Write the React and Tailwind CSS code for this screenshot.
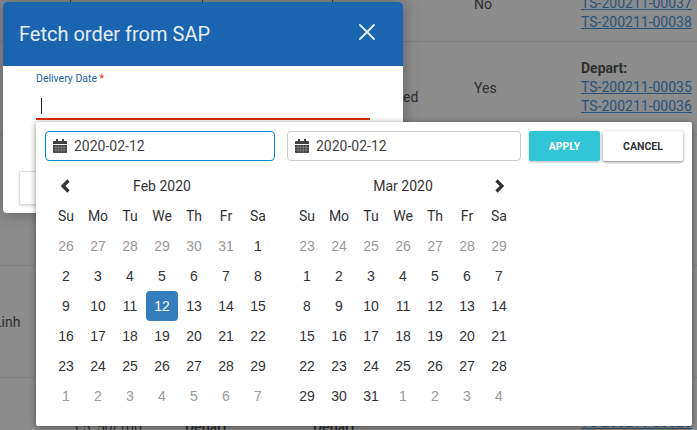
import { X } from 'lucide-react'

const WEEKDAYS = ['Su', 'Mo', 'Tu', 'We', 'Th', 'Fr', 'Sa']

const FEB = [
  [26, 27, 28, 29, 30, 31, 1],
  [2, 3, 4, 5, 6, 7, 8],
  [9, 10, 11, 12, 13, 14, 15],
  [16, 17, 18, 19, 20, 21, 22],
  [23, 24, 25, 26, 27, 28, 29],
  [1, 2, 3, 4, 5, 6, 7],
]

const MAR = [
  [23, 24, 25, 26, 27, 28, 29],
  [1, 2, 3, 4, 5, 6, 7],
  [8, 9, 10, 11, 12, 13, 14],
  [15, 16, 17, 18, 19, 20, 21],
  [22, 23, 24, 25, 26, 27, 28],
  [29, 30, 31, 1, 2, 3, 4],
]

function CalendarIcon() {
  return (
    <svg width="14" height="14" viewBox="0 0 14 14" className="shrink-0" fill="#3f3f3f">
      <rect x="3" y="0" width="2" height="3" />
      <rect x="9" y="0" width="2" height="3" />
      <path d="M1 2h12a1 1 0 0 1 1 1v2H0V3a1 1 0 0 1 1-1z" />
      <path d="M0 6h14v7a1 1 0 0 1-1 1H1a1 1 0 0 1-1-1z" />
      <path d="M0 8.5h14M0 11h14M3 6v8M5.7 6v8M8.4 6v8M11 6v8" stroke="#999" strokeWidth="0.6" />
    </svg>
  )
}

function Chevron({ dir }) {
  return (
    <svg width="12" height="14" viewBox="0 0 12 14" fill="none" stroke="#333" strokeWidth="3.2" strokeLinejoin="miter">
      <polyline points={dir === 'left' ? '8.5,1.5 3,7 8.5,12.5' : '3.5,1.5 9,7 3.5,12.5'} />
    </svg>
  )
}

function Month({ title, weeks, firstOffWeekEnd, lastOffFrom, selected, left, right }) {
  return (
    <div className="w-56 font-['Liberation_Sans',sans-serif] text-sm text-[#333]">
      <div className="grid h-[30px] grid-cols-7 items-center text-center font-['Roboto',sans-serif]">
        <div className="flex justify-center">{left && <Chevron dir="left" />}</div>
        <div className="col-span-5">{title}</div>
        <div className="flex justify-center">{right && <Chevron dir="right" />}</div>
      </div>
      <div className="grid grid-cols-7 text-center">
        {WEEKDAYS.map((d) => (
          <div key={d} className="flex h-[30px] items-center justify-center font-['Roboto',sans-serif]">{d}</div>
        ))}
        {weeks.map((week, w) =>
          week.map((day, i) => {
            const off = (w === 0 && i < firstOffWeekEnd) || (w === 5 && i >= lastOffFrom)
            const isSel = w === 2 && day === selected
            return (
              <div
                key={`${w}-${i}`}
                className={
                  isSel
                    ? 'flex h-[30px] items-center justify-center rounded-[4px] bg-[#357ebd] text-white'
                    : off
                      ? 'flex h-[30px] items-center justify-center text-[#999]'
                      : 'flex h-[30px] items-center justify-center'
                }
              >
                {day}
              </div>
            )
          }),
        )}
      </div>
    </div>
  )
}

export default function App() {
  return (
    <div className="relative h-[430px] w-[697px] overflow-hidden bg-[#8c8c8c] font-['Roboto',sans-serif] text-sm text-[#2f2f2f]">
      {/* table behind the backdrop */}
      <div className="grid grid-cols-[474px_107px_116px]">
        <div className="col-span-3 grid h-[42px] grid-cols-[474px_107px_116px] border-b border-[#7f7f7f]">
          <div className="flex items-start">
            <div className="ml-[70px] h-[2px] w-px bg-[#444]" />
            <div className="ml-[131px] h-[2px] w-px bg-[#444]" />
            <div className="ml-[129px] h-[2px] w-px bg-[#444]" />
          </div>
          <div className="mt-[-5px] leading-[19px]">No</div>
          <div className="mt-[-6px] leading-[19px] text-[#2b5378] underline">
            <div>TS-200211-00037</div>
            <div>TS-200211-00038</div>
          </div>
        </div>

        <div className="col-span-3 grid h-[93px] grid-cols-[474px_107px_116px] items-center border-b border-[#7f7f7f]">
          <div className="pl-[403px]"><span className="relative top-[9px]">ed</span></div>
          <div>Yes</div>
          <div className="mt-[-2px] leading-[19px]">
            <div className="font-bold">Depart:</div>
            <div className="text-[#2b5378] underline">TS-200211-00035</div>
            <div className="text-[#2b5378] underline">TS-200211-00036</div>
          </div>
        </div>

        <div className="col-span-3 h-[131px] border-b border-[#7f7f7f]" />

        <div className="col-span-3 flex h-[112px] items-center border-b border-[#7f7f7f]">
          <span className="ml-[-6px]">Linh</span>
        </div>

        <div className="col-span-3 grid grid-cols-[75px_110px_128px_268px_116px] pt-[40px] leading-[19px]">
          <div />
          <div>L5, 50/100</div>
          <div className="font-bold">Depart:</div>
          <div className="font-bold">Depart:</div>
          <div className="mt-[-5px] text-[#2b5378] underline">TS-200211-00025</div>
        </div>
      </div>

      {/* Fetch order modal */}
      <div className="absolute left-[3px] top-[2px] h-[211px] w-[400px] overflow-hidden rounded-[4px] bg-white shadow-[0_0_16px_rgba(0,0,0,0.35)]">
        <div className="flex h-16 items-center justify-between bg-[#1b65b0] pl-4 pr-[22px] text-[#e3edf7]">
          <span className="text-xl">Fetch order from SAP</span>
          <X size={28} strokeWidth={1.6} className="mt-[-4px]" />
        </div>
        <div className="px-[33px] pt-[6px]">
          <div className="text-[10.5px] leading-[14px] text-[#1b65b0]">
            Delivery Date <span className="text-[#dd2c00]">*</span>
          </div>
          <div className="mt-[5px] flex h-[29px] w-[334px] items-start border-b-2 border-[#dd2c00] pl-[5px] pt-[7px]">
            <div className="h-4 w-px bg-[#222]" />
          </div>
        </div>
        <div className="ml-4 mt-[51px] h-[34px] w-24 rounded-[2px] border border-[#ddd] bg-white shadow-sm" />
      </div>

      {/* Date range picker */}
      <div className="absolute left-9 top-[122px] h-[304px] w-[656px] rounded-[2px] bg-white pl-[9px] pr-[9px] pt-[9px] shadow-[0_1px_6px_rgba(0,0,0,0.45)]">
        <div className="flex h-[30px] items-stretch">
          <div className="flex w-[230px] items-center gap-[7px] rounded-[4px] border border-[#0288d1] pl-[7px] text-[#444]">
            <CalendarIcon />
            <span>2020-02-12</span>
          </div>
          <div className="ml-3 flex w-[234px] items-center gap-[7px] rounded-[4px] border border-[#ccc] pl-[7px] text-[#444]">
            <CalendarIcon />
            <span>2020-02-12</span>
          </div>
          <button className="ml-2 w-[71px] rounded-[2px] bg-[#32c5d6] text-[10.5px] font-bold text-white shadow-[0_1px_3px_rgba(0,0,0,0.3)]">
            APPLY
          </button>
          <button className="ml-[3px] w-20 rounded-[2px] bg-white text-[10.5px] font-bold text-[#333] shadow-[0_1px_3px_rgba(0,0,0,0.5)]">
            CANCEL
          </button>
        </div>
        <div className="ml-[5px] mt-[10px] flex gap-[17px]">
          <Month title="Feb 2020" weeks={FEB} firstOffWeekEnd={6} lastOffFrom={0} selected={12} left />
          <Month title="Mar 2020" weeks={MAR} firstOffWeekEnd={7} lastOffFrom={3} right />
        </div>
      </div>
    </div>
  )
}
